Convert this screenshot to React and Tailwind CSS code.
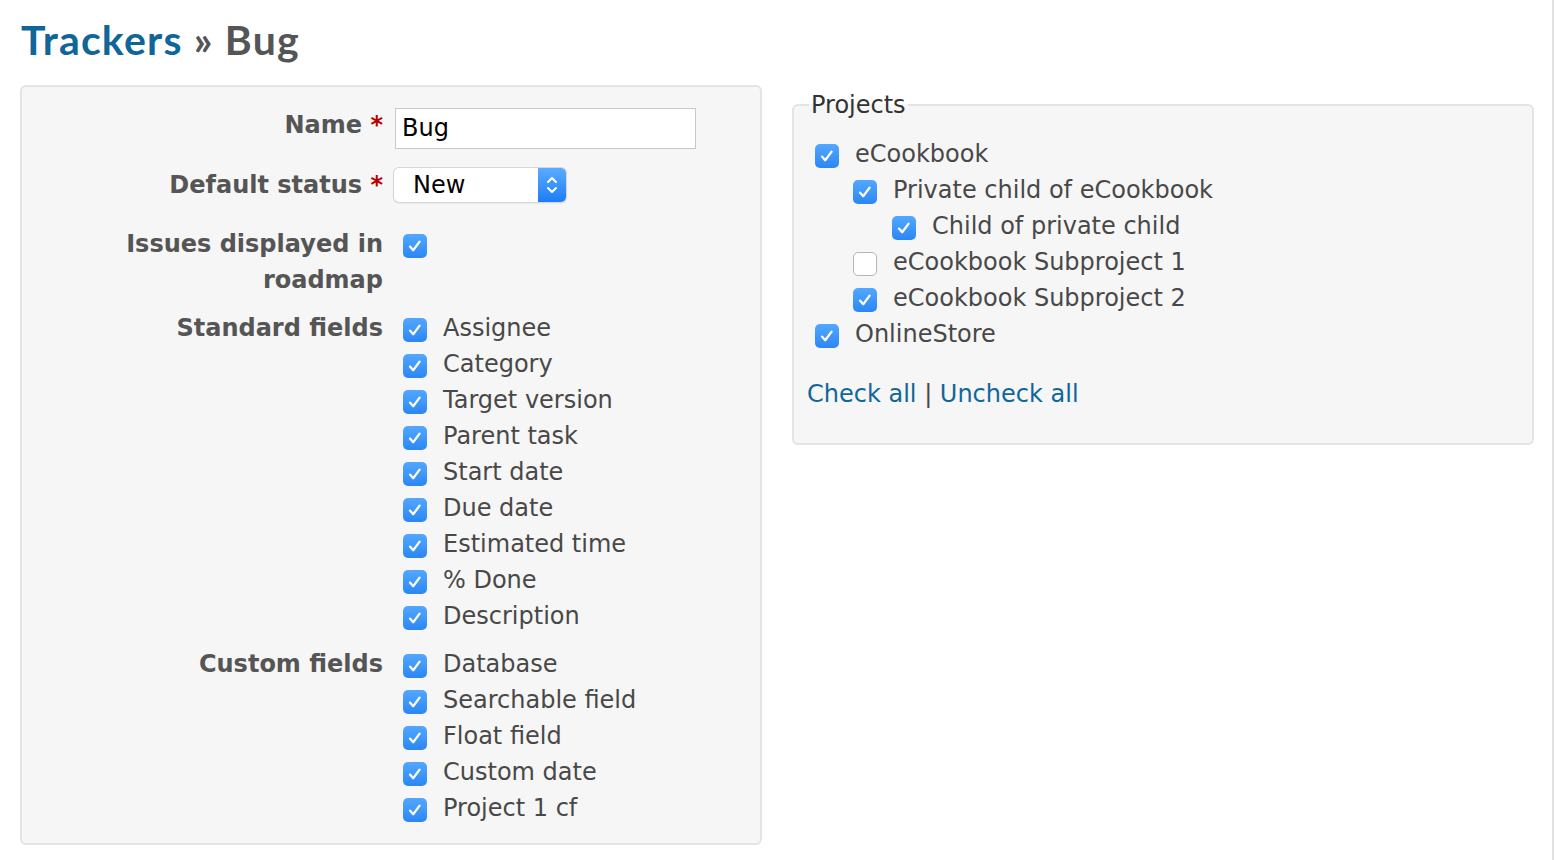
import React from 'react';

const Check = ({ checked = true }) =>
  checked ? (
    <span className="w-6 h-6 shrink-0 rounded-[5px] bg-gradient-to-b from-[#52a8ff] to-[#2b86f5] flex items-center justify-center">
      <svg width="24" height="24" viewBox="0 0 24 24" fill="none">
        <path d="M7 12.6l3.2 3.6L16.6 7.6" stroke="white" strokeWidth="2.3" strokeLinecap="round" strokeLinejoin="round" />
      </svg>
    </span>
  ) : (
    <span className="block w-6 h-6 shrink-0 rounded-[5px] bg-white border border-[#b5b5b5]" />
  );

const Label = ({ children, req, pt = '' }) => (
  <div className={`w-[350px] ml-[11px] shrink-0 text-right font-bold text-[#555] leading-[36px] ${pt}`}>
    {children}
    {req && <span className="text-[#bb0000]"> *</span>}
  </div>
);

const CheckRow = ({ label, checked = true, indent = 0 }) => (
  <div className="flex items-center h-[36px]" style={{ paddingLeft: indent }}>
    <span className="block translate-y-[2px]">
      <Check checked={checked} />
    </span>
    <span className="ml-4 whitespace-nowrap">{label}</span>
  </div>
);

const standard = ['Assignee', 'Category', 'Target version', 'Parent task', 'Start date', 'Due date', 'Estimated time', '% Done', 'Description'];
const custom = ['Database', 'Searchable field', 'Float field', 'Custom date', 'Project 1 cf'];

const projects = [
  { name: 'eCookbook', indent: 0 },
  { name: 'Private child of eCookbook', indent: 38 },
  { name: 'Child of private child', indent: 77 },
  { name: 'eCookbook Subproject 1', indent: 38, checked: false },
  { name: 'eCookbook Subproject 2', indent: 38 },
  { name: 'OnlineStore', indent: 0 },
];

export default function App() {
  return (
    <div
      className="w-[1554px] h-[860px] bg-white border-r-2 border-[#e2e2e2] text-[24px] text-[#484848] overflow-hidden"
      style={{ fontFamily: 'Verdana, "DejaVu Sans", sans-serif' }}
    >
      <div className="pl-[21px] pt-[14px] h-[85px]">
        <h2 className="text-[41px] font-bold leading-[52px] tracking-[1.2px]" style={{ fontFamily: '"Trebuchet MS", Lato, sans-serif' }}>
          <span className="text-[#116699]">Trackers</span>
          <span className="text-[#555]"> » Bug</span>
        </h2>
      </div>

      <div className="flex pl-[20px] gap-[30px] items-start">
        {/* left form */}
        <div className="w-[742px] h-[760px] bg-[#f6f6f6] border-2 border-[#e4e4e4] rounded-[6px] pt-[13px]">
          <div className="flex h-[49px]">
            <Label req pt="pt-[7px]">Name</Label>
            <div className="pl-[12px]">
              <div className="mt-[8px] w-[301px] h-[41px] bg-white border border-[#c8c8c8] pl-[6px] leading-[39px] text-black">Bug</div>
            </div>
          </div>
          <div className="flex h-[53px] mt-[12px]">
            <Label req pt="pt-[6px]">Default status</Label>
            <div className="pl-[11px]">
              <div className="mt-[7px] w-[172px] h-[34px] flex rounded-[5px] bg-white shadow-[0_0_0_1px_#d6d6d6,0_1px_2px_rgba(0,0,0,0.15)] overflow-hidden">
                <span className="flex-1 pl-[19px] leading-[34px] text-black">New</span>
                <span className="w-[28px] h-full bg-gradient-to-b from-[#5aacff] to-[#1a7cf7] flex items-center justify-center">
                  <svg width="14" height="22" viewBox="0 0 14 22" fill="none">
                    <path d="M3 8l4-4 4 4M3 14l4 4 4-4" stroke="white" strokeWidth="2" strokeLinecap="round" strokeLinejoin="round" />
                  </svg>
                </span>
              </div>
            </div>
          </div>
          <div className="flex mt-[12px]">
            <Label>Issues displayed in roadmap</Label>
            <div className="pl-[20px] pt-[8px]">
              <Check />
            </div>
          </div>
          <div className="flex mt-[12px]">
            <Label>Standard fields</Label>
            <div className="pl-[20px]">
              {standard.map((s) => (
                <CheckRow key={s} label={s} />
              ))}
            </div>
          </div>
          <div className="flex mt-[12px]">
            <Label>Custom fields</Label>
            <div className="pl-[20px]">
              {custom.map((s) => (
                <CheckRow key={s} label={s} />
              ))}
            </div>
          </div>
        </div>

        {/* projects */}
        <fieldset className="w-[742px] h-[355px] mt-[5px] bg-[#f6f6f6] border-2 border-[#e4e4e4] rounded-[6px] pl-[21px] pr-[12px] pt-[16px]">
          <legend className="px-[2px] ml-[-6px] text-[#333] leading-[30px]">Projects</legend>
          {projects.map((p) => (
            <CheckRow key={p.name} label={p.name} indent={p.indent} checked={p.checked !== false} />
          ))}
          <div className="mt-[24px] ml-[-8px] leading-[36px]">
            <a className="text-[#116699]">Check all</a> | <a className="text-[#116699]">Uncheck all</a>
          </div>
        </fieldset>
      </div>
    </div>
  );
}
